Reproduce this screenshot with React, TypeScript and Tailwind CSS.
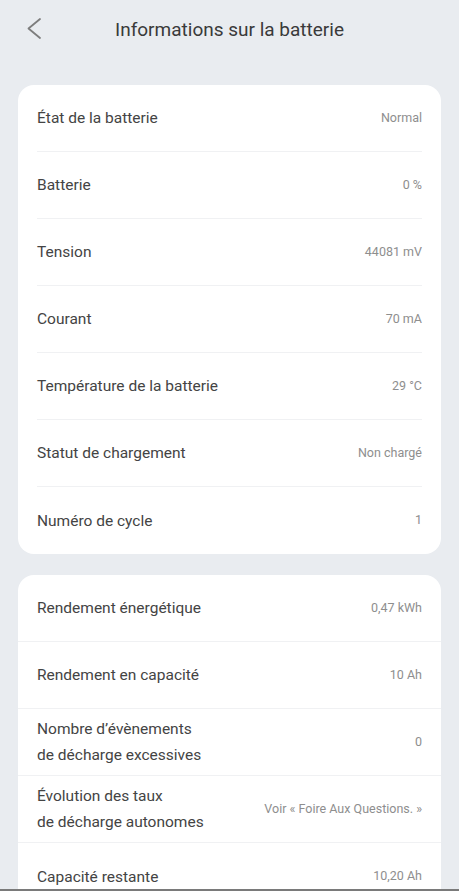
type Row = { label: string[]; value: string };

const batteryRows: Row[] = [
  { label: ["État de la batterie"], value: "Normal" },
  { label: ["Batterie"], value: "0 %" },
  { label: ["Tension"], value: "44081 mV" },
  { label: ["Courant"], value: "70 mA" },
  { label: ["Température de la batterie"], value: "29 °C" },
  { label: ["Statut de chargement"], value: "Non chargé" },
  { label: ["Numéro de cycle"], value: "1" },
];

const statsRows: Row[] = [
  { label: ["Rendement énergétique"], value: "0,47 kWh" },
  { label: ["Rendement en capacité"], value: "10 Ah" },
  { label: ["Nombre d’évènements", "de décharge excessives"], value: "0" },
  { label: ["Évolution des taux", "de décharge autonomes"], value: "Voir « Foire Aux Questions. »" },
  { label: ["Capacité restante"], value: "10,20 Ah" },
];

function InfoRow({ row, divider, inset }: { row: Row; divider: boolean; inset: boolean }) {
  return (
    <div className={inset ? "px-[19px]" : ""}>
      <div
        className={`flex h-[67px] items-center justify-between ${inset ? "" : "px-[19px]"} ${
          divider ? "border-b border-[#f0f1f3]" : ""
        }`}
      >
        <div className="text-[15.5px] leading-[26px] text-[#444]">
          {row.label.map((l) => (
            <div key={l}>{l}</div>
          ))}
        </div>
        <div className="text-[12.5px] text-[#8e8e8e]">{row.value}</div>
      </div>
    </div>
  );
}

export default function App() {
  return (
    <div
      className="flex h-[891px] flex-col overflow-hidden border-b-2 border-[#7a7a7a] bg-[#e9ecf0]"
      style={{ fontFamily: "Roboto, 'Noto Sans', sans-serif" }}
    >
      <header className="relative flex h-[60px] shrink-0 items-center justify-center">
        <svg className="absolute left-[26px] top-[17px]" width="16" height="23" viewBox="0 0 16 23" fill="none">
          <polyline points="14,2 2.5,11.5 14,21" stroke="#7d7d7d" strokeWidth="1.8" strokeLinecap="round" strokeLinejoin="round" />
        </svg>
        <h1 className="text-[19px] text-[#3a3a3a]">Informations sur la batterie</h1>
      </header>

      <div className="mx-[18px] mt-[25px] shrink-0 rounded-[16px] bg-white">
        {batteryRows.map((r, i) => (
          <InfoRow key={r.value + i} row={r} divider={i < batteryRows.length - 1} inset />
        ))}
      </div>

      <div className="mx-[18px] mt-[21px] shrink-0 rounded-t-[16px] bg-white">
        {statsRows.map((r, i) => (
          <InfoRow key={r.value + i} row={r} divider={i < statsRows.length - 1} inset={false} />
        ))}
      </div>
    </div>
  );
}
